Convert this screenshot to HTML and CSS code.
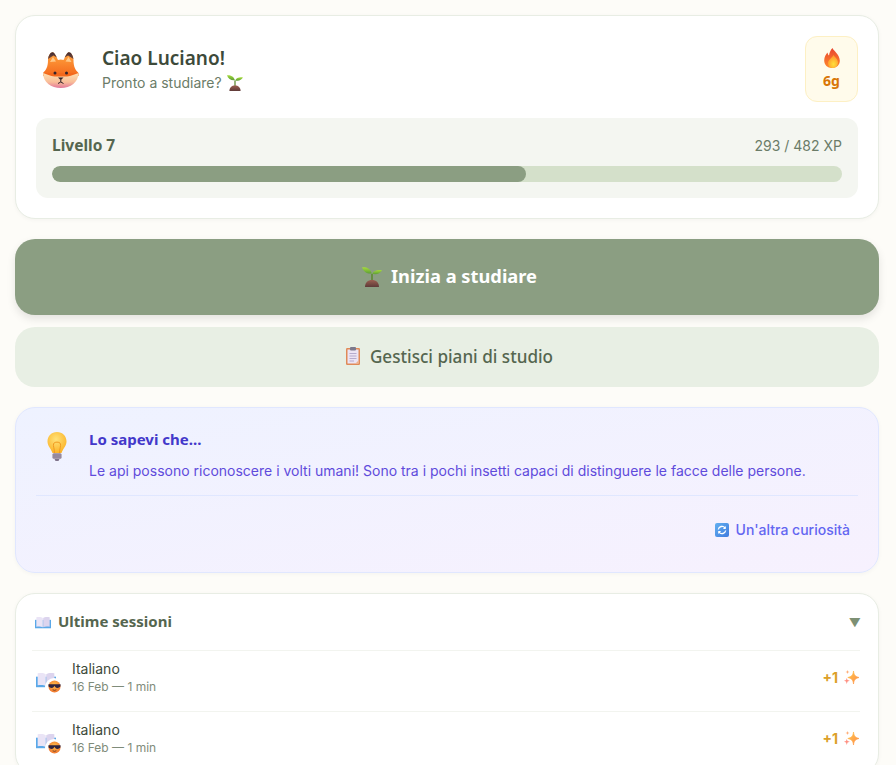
FILE: index.html
```html
<!DOCTYPE html>
<html lang="it">
<head>
    <meta charset="UTF-8">
    <meta name="viewport" content="width=device-width, initial-scale=1.0">
    <title>Home</title>
    <link rel="stylesheet" href="styles.css">
</head>
<body>
    <svg class="icon-defs" aria-hidden="true">
        <defs>
            <linearGradient id="gFox" x1="0" y1="0" x2="0" y2="1"><stop offset="0" stop-color="#ffa640"/><stop offset="1" stop-color="#f4681c"/></linearGradient>
            <linearGradient id="gEar" x1="0" y1="0" x2="0" y2="1"><stop offset="0" stop-color="#3c2a34"/><stop offset="1" stop-color="#7a4a3a"/></linearGradient>
            <linearGradient id="gChin" x1="0" y1="0" x2="0" y2="1"><stop offset="0" stop-color="#fde0b0"/><stop offset="0.6" stop-color="#f9bd98"/><stop offset="1" stop-color="#e2789c"/></linearGradient>
            <linearGradient id="gLeaf" x1="0" y1="0" x2="0" y2="1"><stop offset="0" stop-color="#a6dc3c"/><stop offset="1" stop-color="#5d9e36"/></linearGradient>
            <linearGradient id="gSoil" x1="0" y1="0" x2="0" y2="1"><stop offset="0" stop-color="#9a5f50"/><stop offset="1" stop-color="#5e3a38"/></linearGradient>
            <linearGradient id="gFlame" x1="0" y1="0" x2="0" y2="1"><stop offset="0" stop-color="#e8442e"/><stop offset="1" stop-color="#ff8a2c"/></linearGradient>
            <radialGradient id="gFlameIn" cx="0.55" cy="0.7" r="0.6"><stop offset="0" stop-color="#ffe03c"/><stop offset="1" stop-color="#ff9a2c"/></radialGradient>
            <radialGradient id="gBulb" cx="0.45" cy="0.35" r="0.7"><stop offset="0" stop-color="#ffe27a"/><stop offset="1" stop-color="#fbb022"/></radialGradient>
            <linearGradient id="gBlue" x1="0" y1="0" x2="1" y2="1"><stop offset="0" stop-color="#62b0f0"/><stop offset="1" stop-color="#3f7ade"/></linearGradient>
            <radialGradient id="gSun" cx="0.5" cy="0.4" r="0.65"><stop offset="0" stop-color="#ffc24a"/><stop offset="1" stop-color="#f0702c"/></radialGradient>
            <linearGradient id="gStar" x1="0" y1="0" x2="1" y2="1"><stop offset="0" stop-color="#ffc84a"/><stop offset="1" stop-color="#ff8a4a"/></linearGradient>

            <symbol id="i-fox" viewBox="0 0 36 36">
                <path d="M0 21C3 18 5 15 5 8 5 4 8-1 10.500.5 12 1.500 13.500 5 15 8Q17.800 7 20.500 8C22 5 23.500 1.500 25 .5 27.500-1 30.500 4 30.500 8 30.500 15 32.500 18 35.500 21V24H0Z" fill="url(#gFox)"/>
                <path d="M5.100 7C5.500 3 8-1 10.500.5 12 1.500 12.800 3.500 13.800 5.500L10.500 3.500Z M30.400 7C30 3 27.500-1 25 .5 23.500 1.500 22.700 3.500 21.700 5.500L25 3.500Z" fill="url(#gEar)"/>
                <path d="M7 10L10 5 13 9.500ZM28.500 10L25.500 5 22.500 9.500Z" fill="#ffc988"/>
                <path d="M0 21H35.500C35.500 30 27.500 36 17.800 36S0 30 0 21Z" fill="url(#gChin)"/>
                <path d="M0 21H35.500C32 22 28 24 24 24.500H11.500C7.500 24 3.500 22 0 21Z" fill="#f4681c"/>
                <circle cx="12" cy="21" r="1.500" fill="#33232a"/>
                <circle cx="23.500" cy="21" r="1.500" fill="#33232a"/>
                <path d="M15 25.500H20.500L17.800 28.300Z" fill="#33232a"/>
                <path d="M17.800 28V30M17.800 30L15 31.500M17.800 30L20.500 31.500" stroke="#33232a" stroke-width="1" fill="none"/>
            </symbol>

            <symbol id="i-sprout" viewBox="0 0 20 20">
                <path d="M10 7V14" stroke="#5d8a30" stroke-width="1.600"/>
                <path d="M0 .300C4 -.200 8.500 1.300 9.800 6.500 5 7 1.500 5 0 .300Z" fill="url(#gLeaf)"/>
                <path d="M20 3.200C16 2.500 11.500 3.300 10.200 6.800 14.500 8 18 6.500 20 3.200Z" fill="url(#gLeaf)"/>
                <path d="M3 20C3 15.500 6 13 10 13S17 15.500 17 20Z" fill="url(#gSoil)"/>
            </symbol>

            <symbol id="i-flame" viewBox="0 0 16 20">
                <path d="M8.500 0C9.500 3 15.500 6 15.800 12.500 16 17 12.500 20 8 20S.200 17 .200 12.500C.200 9 2 6 3.500 4.500 3.800 6 4.300 7 5 7.500 5.500 4.500 6.500 2 8.500 0Z" fill="url(#gFlame)"/>
                <path d="M9.500 7C10.500 9 14 11 14 14.500 14 17.800 11.500 20 8.500 20S4 17.800 4 15C4 12 7.500 10.500 9.500 7Z" fill="url(#gFlameIn)"/>
            </symbol>

            <symbol id="i-clipboard" viewBox="0 0 14 18">
                <rect x="0" y="1" width="14" height="17" rx="1.200" fill="#e08a58"/>
                <rect x="1.500" y="2.500" width="11" height="14" fill="#ece4f4"/>
                <path d="M9.500 16.500H12.500V13.500Z" fill="#f0b088"/>
                <rect x="4" y="0" width="6" height="3.500" rx="1" fill="#7c7a8c"/>
                <path d="M3.500 6.500H10.500M3.500 9H10.500M3.500 11.500H10.500M3.500 14H8" stroke="#b0a4c8" stroke-width=".9"/>
            </symbol>

            <symbol id="i-bulb" viewBox="0 0 20 30">
                <path d="M10 0C15.500 0 19.500 4 19.500 9.500 19.500 14 16 16.500 14.500 21H5.500C4 16.500 .500 14 .500 9.500.500 4 4.500 0 10 0Z" fill="url(#gBulb)"/>
                <path d="M7.500 21C7.500 17 6 14 6.500 12 7 9.500 13 9.500 13.500 12 14 14 12.500 17 12.500 21" fill="none" stroke="#f09a20" stroke-width="1"/>
                <rect x="5.500" y="21" width="9" height="6" rx="1.500" fill="#a89cac"/>
                <path d="M5.500 23H14.500M5.500 25H14.500" stroke="#7c7088" stroke-width=".8"/>
                <path d="M7.500 27H12.500L11.500 29H8.500Z" fill="#80748c"/>
            </symbol>

            <symbol id="i-refresh" viewBox="0 0 14 14">
                <rect width="14" height="14" rx="2" fill="url(#gBlue)"/>
                <path d="M3.300 6.500A3.800 3.800 0 0 1 10 4.800M10.700 7.500A3.800 3.800 0 0 1 4 9.200" fill="none" stroke="#fff" stroke-width="1.300"/>
                <path d="M10.800 3V6H7.900ZM3.200 11V8H6.100Z" fill="#fff"/>
            </symbol>

            <symbol id="i-book" viewBox="0 0 18 14">
                <path d="M0 4H18V13.500H0Z" fill="#5aa8e8"/>
                <path d="M1.500 1C4 .500 7 .500 8.800 1.800V12.300C7 11.300 4 11.300 1.500 11.800Z" fill="#eae4f6"/>
                <path d="M16.500 1C14 .500 11 .500 9.200 1.800V12.300C11 11.300 14 11.300 16.500 11.800Z" fill="#dcd4ee"/>
            </symbol>

            <symbol id="i-cool" viewBox="0 0 14 14">
                <circle cx="7" cy="7" r="6.500" fill="url(#gSun)"/>
                <path d="M.500 4.500H13.500V6C13.500 8 11.500 8.500 10 8.500S7.500 7.500 7 6.300C6.500 7.500 5.500 8.500 4 8.500S.500 8 .500 6Z" fill="#2f2440"/>
                <path d="M5 10.500Q7 11.800 9 10.500" fill="none" stroke="#6a3020" stroke-width=".9"/>
            </symbol>

            <symbol id="i-sparkle" viewBox="0 0 15 15">
                <path d="M9.500 1C10 4.800 11 6.500 15 7.500 11 8.500 10 10.200 9.500 14 9 10.200 8 8.500 3.800 7.500 8 6.500 9 4.800 9.500 1Z" fill="url(#gStar)" stroke="url(#gStar)" stroke-width=".7"/>
                <path d="M2.800 8L3.500 10 5.800 10.800 3.500 11.500 2.800 14 2 11.500 0 10.800 2 10Z" fill="#ff8f80"/>
                <path d="M3.500 0L4 1.500 5.500 2 4 2.500 3.500 4 3 2.500 1.500 2 3 1.500Z" fill="#ffa870"/>
            </symbol>
        </defs>
    </svg>

    <main class="page">
        <section class="card hero">
            <div class="hero-top">
                <svg class="fox"><use href="#i-fox"/></svg>
                <div class="hero-text">
                    <h1>Ciao Luciano!</h1>
                    <p>Pronto a studiare? <svg class="sprout-small"><use href="#i-sprout"/></svg></p>
                </div>
                <div class="streak">
                    <svg class="flame"><use href="#i-flame"/></svg>
                    <span>6g</span>
                </div>
            </div>
            <div class="level">
                <div class="level-row">
                    <span class="level-name">Livello 7</span>
                    <span class="level-xp">293 / 482 XP</span>
                </div>
                <div class="bar"><div class="bar-fill" style="width: 60%"></div></div>
            </div>
        </section>

        <button class="btn-start"><svg class="sprout-big"><use href="#i-sprout"/></svg>Inizia a studiare</button>
        <button class="btn-plans"><svg class="clipboard"><use href="#i-clipboard"/></svg>Gestisci piani di studio</button>

        <section class="card fact">
            <div class="fact-body">
                <svg class="bulb"><use href="#i-bulb"/></svg>
                <div>
                    <h3>Lo sapevi che...</h3>
                    <p>Le api possono riconoscere i volti umani! Sono tra i pochi insetti capaci di distinguere le facce delle persone.</p>
                </div>
            </div>
            <div class="fact-footer">
                <a class="fact-link"><svg class="refresh"><use href="#i-refresh"/></svg>Un'altra curiosità</a>
            </div>
        </section>

        <section class="card sessions">
            <div class="sessions-head">
                <h3><svg class="book-small"><use href="#i-book"/></svg>Ultime sessioni</h3>
                <span class="caret">▼</span>
            </div>
            <div class="session">
                <div class="session-icon">
                    <svg class="book"><use href="#i-book"/></svg>
                    <span class="badge"><svg class="cool"><use href="#i-cool"/></svg></span>
                </div>
                <div class="session-info">
                    <div class="session-name">Italiano</div>
                    <div class="session-meta">16 Feb — 1 min</div>
                </div>
                <div class="session-xp">+1 <svg class="sparkle"><use href="#i-sparkle"/></svg></div>
            </div>
            <div class="session">
                <div class="session-icon">
                    <svg class="book"><use href="#i-book"/></svg>
                    <span class="badge"><svg class="cool"><use href="#i-cool"/></svg></span>
                </div>
                <div class="session-info">
                    <div class="session-name">Italiano</div>
                    <div class="session-meta">16 Feb — 1 min</div>
                </div>
                <div class="session-xp">+1 <svg class="sparkle"><use href="#i-sparkle"/></svg></div>
            </div>
        </section>
    </main>
</body>
</html>
```

FILE: styles.css
```css
html, body {
    height: 100%;
    overflow: hidden;
}
body {
    font-family: Inter, "Liberation Sans", sans-serif;
    background-color: #fdfcf8;
    margin: 0;
    color: #3d4a3a;
}
.icon-defs {
    display: block;
    width: 0;
    height: 0;
}
.page {
    width: 864px;
    padding-top: 15px;
    margin-left: 15px;
    display: flex;
    flex-direction: column;
}
h1, h3, p {
    margin: 0;
}
svg {
    display: block;
    flex-shrink: 0;
}
.card {
    background-color: #fff;
    border: 1px solid #e8ede4;
    border-radius: 20px;
    box-shadow: 0 1px 4px rgba(0,0,0,0.04);
}

/* saluto e livello */
.hero {
    padding: 20px;
    margin-bottom: 20px;
}
.hero-top {
    display: flex;
    align-items: center;
    margin-bottom: 16px;
}
.fox {
    width: 36px;
    height: 36px;
    margin: 2px 23px 0 7px;
}
.hero-text {
    flex: 1;
    align-self: flex-start;
    margin-top: 9px;
}
.hero-text h1 {
    font-family: "Noto Sans", sans-serif;
    font-size: 19px;
    font-weight: 600;
    line-height: 26px;
    color: #3d4a3a;
}
.hero-text p {
    display: flex;
    align-items: center;
    gap: 5px;
    margin-top: 1px;
    font-size: 14px;
    line-height: 22px;
    color: #6b7c68;
}
.sprout-small {
    width: 16px;
    height: 16px;
}
.streak {
    width: 53px;
    height: 66px;
    box-sizing: border-box;
    background-color: #fffbeb;
    border: 1px solid #fdf0c4;
    border-radius: 12px;
    display: flex;
    flex-direction: column;
    align-items: center;
    justify-content: center;
    gap: 4px;
}
.flame {
    width: 16px;
    height: 20px;
}
.streak span {
    font-family: "Noto Sans", sans-serif;
    font-size: 14px;
    font-weight: 700;
    line-height: 18px;
    color: #d97706;
}
.level {
    background-color: #f4f6f1;
    border-radius: 12px;
    padding: 16px;
}
.level-row {
    display: flex;
    justify-content: space-between;
    align-items: center;
    height: 22px;
    margin-bottom: 10px;
}
.level-name {
    font-family: "Noto Sans", sans-serif;
    font-size: 15.5px;
    font-weight: 700;
    color: #55664f;
}
.level-xp {
    font-size: 14px;
    color: #6b7c68;
}
.bar {
    height: 16px;
    background-color: #d4e0ca;
    border-radius: 8px;
    overflow: hidden;
}
.bar-fill {
    height: 100%;
    background-color: #8b9e82;
    border-radius: 8px;
}

/* bottoni */
.btn-start, .btn-plans {
    border: none;
    border-radius: 20px;
    display: flex;
    align-items: center;
    justify-content: center;
    font-family: "Noto Sans", sans-serif;
    width: 100%;
    padding: 0 0 2px 5px;
    cursor: pointer;
}
.btn-start {
    height: 76px;
    background-color: #8b9e82;
    color: #fff;
    font-size: 18.3px;
    font-weight: 700;
    box-shadow: 0 4px 8px rgba(0,0,0,0.1);
    margin-bottom: 12px;
    padding-bottom: 4px;
}
.sprout-big {
    width: 20px;
    height: 20px;
    margin: 3px 9px 0 0;
}
.btn-plans {
    height: 60px;
    background-color: #e8efe4;
    color: #55664f;
    font-size: 17.1px;
    font-weight: 500;
    margin-bottom: 20px;
}
.clipboard {
    width: 14px;
    height: 18px;
    margin-right: 10px;
}

/* curiosita */
.fact {
    background: linear-gradient(to bottom right, #eef2ff, #f7f1fe);
    border-color: #e0e7ff;
    padding: 20px;
    height: 166px;
    box-sizing: border-box;
    margin-bottom: 20px;
}
.fact-body {
    display: flex;
    height: 68px;
    box-sizing: border-box;
    border-bottom: 1px solid #e0e7ff;
}
.bulb {
    width: 20px;
    height: 30px;
    margin: 4px 22px 0 11px;
}
.fact-body h3 {
    font-family: "Noto Sans", sans-serif;
    font-size: 15px;
    font-weight: 700;
    line-height: 22px;
    color: #4338ca;
    margin-bottom: 10px;
}
.fact-body p {
    font-size: 14px;
    line-height: 22px;
    color: #5f4bdc;
}
.fact-footer {
    display: flex;
    justify-content: flex-end;
    padding: 25px 8px 0 0;
}
.fact-link {
    display: flex;
    align-items: center;
    font-size: 14px;
    font-weight: 500;
    color: #6366f1;
}
.refresh {
    width: 14px;
    height: 14px;
    margin-right: 7px;
}

/* sessioni */
.sessions {
    padding: 0 18px 0 16px;
}
.sessions-head {
    display: flex;
    justify-content: space-between;
    align-items: center;
    height: 56px;
    border-bottom: 1px solid #f2f4ef;
}
.sessions-head h3 {
    display: flex;
    align-items: center;
    padding-bottom: 2px;
    font-family: "Noto Sans", sans-serif;
    font-size: 15px;
    font-weight: 700;
    color: #55664f;
}
.book-small {
    width: 16px;
    height: 13px;
    margin: 2px 7px 0 3px;
}
.caret {
    font-size: 12px;
    color: #7d9074;
    margin-right: -1px;
}
.session {
    display: flex;
    align-items: center;
    box-sizing: border-box;
    height: 61px;
    padding-bottom: 7px;
    border-bottom: 1px solid #f2f4ef;
}
.session-icon {
    position: relative;
    width: 24px;
    height: 24px;
    margin: 12px 12px 0 4px;
}
.book {
    width: 20px;
    height: 16px;
}
.badge {
    position: absolute;
    right: -3px;
    bottom: 0;
    width: 18px;
    height: 18px;
    background-color: #fff;
    border-radius: 50%;
    display: flex;
    align-items: center;
    justify-content: center;
}
.cool {
    width: 13px;
    height: 13px;
}
.session-info {
    flex: 1;
}
.session-name {
    font-size: 14px;
    line-height: 18px;
    color: #3d4a3a;
}
.session-meta {
    font-size: 12px;
    line-height: 17px;
    color: #7f8c7a;
}
.session-xp {
    display: flex;
    align-items: center;
    gap: 6px;
    padding-right: 1px;
    font-size: 14px;
    font-weight: 700;
    color: #dca028;
}
.sparkle {
    width: 15px;
    height: 15px;
}
```
